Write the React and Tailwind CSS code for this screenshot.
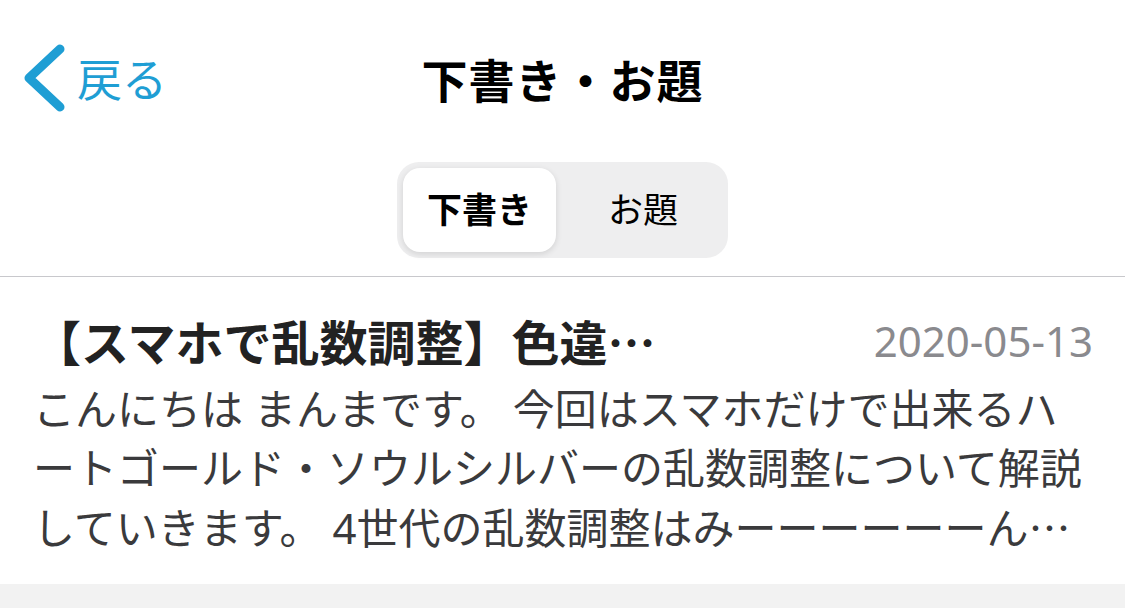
import React from "react";

export default function App() {
  return (
    <div className="w-[1125px] h-[608px] bg-white flex flex-col overflow-hidden font-['Noto_Sans','Noto_Sans_CJK_JP',sans-serif]">
      {/* nav bar */}
      <div className="relative h-[160px] flex items-center justify-center">
        <div className="absolute left-[22px] top-[44px] flex items-center text-[#1f9ed4]">
          <svg width="50" height="70" viewBox="0 0 50 70">
            <polyline
              points="38,5 7,34 38,63"
              fill="none"
              stroke="#1f9ed4"
              strokeWidth="9"
              strokeLinecap="round"
              strokeLinejoin="round"
            />
          </svg>
          <span className="text-[45px] leading-none ml-[5px]">戻る</span>
        </div>
        <div className="text-[46px] font-bold text-black leading-none tracking-[1px]">下書き・お題</div>
      </div>

      {/* segmented control */}
      <div className="pt-[2px] pb-[18px] border-b border-[#c8c8cc] flex justify-center">
        <div className="w-[331px] h-[96px] rounded-[22px] bg-[#eeeeef] p-[6px] flex">
          <div className="w-[153px] h-full rounded-[17px] bg-white shadow-[0_2px_6px_rgba(0,0,0,0.12)] flex items-center justify-center text-[35px] font-bold text-black">
            下書き
          </div>
          <div className="flex-1 flex items-center justify-center text-[35px] text-black pl-[8px]">
            お題
          </div>
        </div>
      </div>

      {/* list item */}
      <div className="pt-[35px] pb-[26px] pl-[33px] pr-[32px] flex flex-col">
        <div className="flex items-center justify-between h-[58px]">
          <div className="text-[48px] font-bold text-[#222222] leading-none whitespace-nowrap">
            【スマホで乱数調整】色違<span className="font-['Noto_Sans_CJK_JP',sans-serif]">…</span>
          </div>
          <div className="text-[42px] text-[#8a8a8e] leading-none whitespace-nowrap">2020-05-13</div>
        </div>
        <div className="mt-[10px] text-[42px] text-[#3a3a3c] leading-[58.5px] whitespace-nowrap">
          <div>こんにちは まんまです。 今回はスマホだけで出来るハ</div>
          <div>ートゴールド・ソウルシルバーの乱数調整について解説</div>
          <div>
            していきます。 4世代の乱数調整はみーーーーーーん<span className="font-['Noto_Sans_CJK_JP',sans-serif]">…</span>
          </div>
        </div>
      </div>

      <div className="flex-1 bg-[#f2f2f2]"></div>
    </div>
  );
}
